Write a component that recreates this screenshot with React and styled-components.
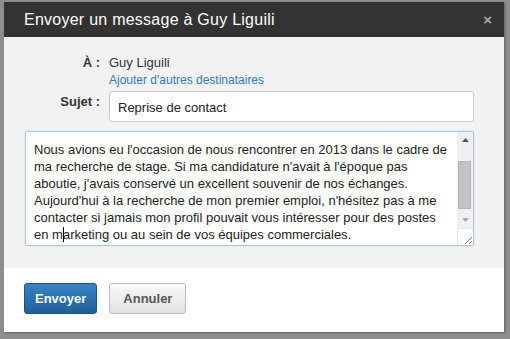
import React from "react";
import styled, { createGlobalStyle } from "styled-components";

const Global = createGlobalStyle`
  html, body {
    margin: 0;
    padding: 0;
    background: #8e8e8e;
    font-family: "Liberation Sans", Arial, sans-serif;
  }
`;

const Backdrop = styled.div`
  width: 510px;
  height: 339px;
  overflow: hidden;
  padding: 2px 6px 0 4px;
  box-sizing: border-box;
`;

const Modal = styled.div`
  width: 500px;
  display: flex;
  flex-direction: column;
  box-shadow: 1px 1px 2px rgba(0, 0, 0, 0.35);
`;

const Header = styled.div`
  height: 35px;
  background: #333333;
  display: flex;
  align-items: center;
  justify-content: space-between;
  padding: 0 12px 0 20px;
`;

const Title = styled.h1`
  margin: 0;
  font-size: 16px;
  font-weight: normal;
  color: #ffffff;
  letter-spacing: 0.25px;
`;

const Close = styled.span`
  font-size: 15px;
  font-weight: bold;
  color: #a9a9a9;
  line-height: 1;
`;

const Body = styled.div`
  background: #f2f2f2;
  padding: 17px 30px 22px 21px;
  display: flex;
  flex-direction: column;
`;

const FieldRow = styled.div`
  display: grid;
  grid-template-columns: 75px 1fr;
  column-gap: 9px;
  margin-bottom: ${(p) => p.gap || 0}px;
`;

const Label = styled.span`
  text-align: right;
  font-size: 13px;
  font-weight: bold;
  color: #333;
  line-height: 17px;
  padding-top: ${(p) => p.top || 0}px;
`;

const Value = styled.div`
  font-size: 13px;
  line-height: 17px;
  color: #333;
`;

const Link = styled.a`
  display: block;
  margin-top: 1px;
  font-size: 12px;
  line-height: 16px;
  color: #2f7db8;
  text-decoration: none;
`;

const Input = styled.div`
  height: 28px;
  background: #fff;
  border: 1px solid #cdcdcd;
  border-radius: 3px;
  padding-left: 8px;
  display: flex;
  align-items: center;
  font-size: 13px;
  color: #222;
  padding-top: 1px;
  box-sizing: content-box;
`;

const TextArea = styled.div`
  height: 113px;
  background: #fff;
  border: 1px solid #a9c8e6;
  border-radius: 2px;
  display: flex;
  box-shadow: 0 0 2px rgba(120, 170, 220, 0.35);
`;

const Text = styled.div`
  flex: 1;
  padding: 9px 0 0 8px;
  font-size: 13px;
  line-height: 17.1px;
  color: #222;
  white-space: pre;
  overflow: hidden;
`;

const Caret = styled.span`
  display: inline-block;
  width: 1px;
  height: 15px;
  margin: 0 -1px -3px 0;
  background: #000;
`;

const Scrollbar = styled.div`
  width: 16px;
  display: flex;
  flex-direction: column;
  background: #f0f0f0;
`;

const Arrow = styled.div`
  height: 16px;
  display: flex;
  align-items: center;
  justify-content: center;
`;

const Track = styled.div`
  flex: 1;
  padding: 13px 0 0 1px;
`;

const Thumb = styled.div`
  width: 13px;
  height: 48px;
  background: #c3c3c3;
  border: 1px solid #b5b5b5;
  box-sizing: border-box;
`;

const Grip = styled.div`
  height: 16px;
  background: #fff;
  border-top: 1px solid #e6e6e6;
  border-left: 1px solid #e6e6e6;
  display: flex;
  align-items: flex-end;
  justify-content: flex-end;
`;

const Footer = styled.div`
  background: #fff;
  height: 64px;
  display: flex;
  align-items: flex-start;
  gap: 12px;
  padding: 15px 0 0 20px;
  box-sizing: border-box;
`;

const Button = styled.button`
  height: 31px;
  padding: 0 ${(p) => (p.primary ? 10 : 13)}px;
  border-radius: 3px;
  font-family: "Liberation Sans", Arial, sans-serif;
  font-size: 13px;
  font-weight: bold;
  cursor: pointer;
  color: ${(p) => (p.primary ? "#fff" : "#555")};
  border: 1px solid ${(p) => (p.primary ? "#1a5386" : "#bdbdbd")};
  background: ${(p) =>
    p.primary
      ? "linear-gradient(#3583c4, #1f5f9a)"
      : "linear-gradient(#fafafa, #e1e1e1)"};
`;

const Triangle = ({ up, color }) => (
  <svg width="7" height="4" viewBox="0 0 7 4">
    <path d={up ? "M0 4 L3.5 0 L7 4 Z" : "M0 0 L3.5 4 L7 0 Z"} fill={color} />
  </svg>
);

const message = [
  "Nous avions eu l'occasion de nous rencontrer en 2013 dans le cadre de",
  "ma recherche de stage. Si ma candidature n'avait à l'époque pas",
  "aboutie, j'avais conservé un excellent souvenir de nos échanges.",
  "Aujourd'hui à la recherche de mon premier emploi, n'hésitez pas à me",
  "contacter si jamais mon profil pouvait vous intéresser pour des postes",
];

export default function App() {
  return (
    <>
      <Global />
      <Backdrop>
        <Modal>
          <Header>
            <Title>Envoyer un message à Guy Liguili</Title>
            <Close>×</Close>
          </Header>
          <Body>
            <FieldRow gap={3}>
              <Label>À :</Label>
              <div>
                <Value>Guy Liguili</Value>
                <Link href="#">Ajouter d'autres destinataires</Link>
              </div>
            </FieldRow>
            <FieldRow gap={9}>
              <Label top={2}>Sujet :</Label>
              <Input>Reprise de contact</Input>
            </FieldRow>
            <TextArea>
              <Text>
                {message.join("\n")}
                {"\nen m"}
                <Caret />
                {"arketing ou au sein de vos équipes commerciales."}
              </Text>
              <Scrollbar>
                <Arrow>
                  <Triangle up color="#555" />
                </Arrow>
                <Track>
                  <Thumb />
                </Track>
                <Arrow>
                  <Triangle color="#a8a8a8" />
                </Arrow>
                <Grip>
                  <svg width="10" height="10" viewBox="0 0 10 10">
                    <path d="M9 2 L2 9 M9 6 L6 9" stroke="#888" strokeWidth="1" />
                  </svg>
                </Grip>
              </Scrollbar>
            </TextArea>
          </Body>
          <Footer>
            <Button primary>Envoyer</Button>
            <Button>Annuler</Button>
          </Footer>
        </Modal>
      </Backdrop>
    </>
  );
}
